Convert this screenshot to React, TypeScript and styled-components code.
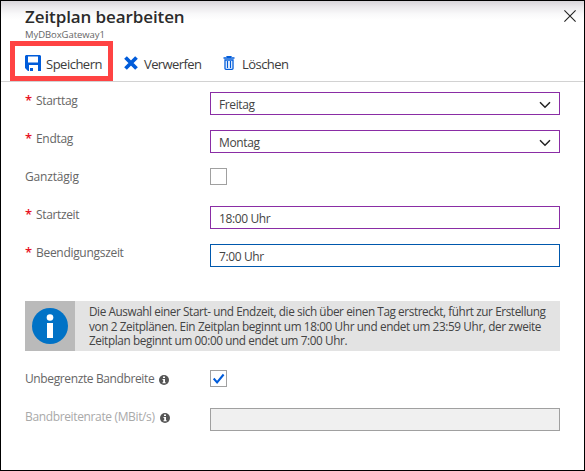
import React from 'react';
import styled, { createGlobalStyle } from 'styled-components';

const GlobalStyle = createGlobalStyle`
  * { box-sizing: border-box; }
  body { margin: 0; background: #fff; }
`;

const Blade = styled.main`
  width: 585px;
  height: 471px;
  border: 1px solid #000;
  background: linear-gradient(#d8d5da 0, #ebe9ec 6px, #f9f9fa 13px, #fff 19px) #fff;
  font-family: 'Open Sans', 'Noto Sans', sans-serif;
  font-size: 12px;
  color: #444;
  overflow: hidden;
`;

const Header = styled.header`
  display: flex;
  justify-content: space-between;
  height: 40px;
  padding: 4px 8px 0 24px;
`;

const Title = styled.h1`
  margin: 0;
  font-size: 17px;
  font-weight: 600;
  line-height: 23px;
  letter-spacing: -0.1px;
  color: #2b2b2b;
  white-space: nowrap;
`;

const Subtitle = styled.div`
  font-size: 9.5px;
  line-height: 13px;
  letter-spacing: -0.07px;
  color: #666;
`;

const CloseButton = styled.button`
  display: flex;
  width: 12px;
  height: 12px;
  margin-top: 5px;
  padding: 0;
  border: 0;
  background: none;
`;

const Toolbar = styled.nav`
  display: flex;
  height: 41px;
  padding-left: 9px;
  border-bottom: 1px solid #d2d2d2;
`;

const Command = styled.button<{ $width: number; $gap: number; $inset?: number; $highlighted?: boolean; $spacing: number }>`
  display: flex;
  align-items: center;
  gap: ${p => p.$gap}px;
  width: ${p => p.$width}px;
  height: 40px;
  padding: 6px 0 0 ${p => p.$inset ?? 0}px;
  border: ${p => (p.$highlighted ? '5px solid #ff4343' : '0')};
  background: none;
  font: inherit;
  font-size: 13px;
  letter-spacing: ${p => p.$spacing}px;
  color: #3c3c3c;
  white-space: nowrap;

  svg {
    flex: none;
    margin-bottom: 2px;
  }
`;

const Form = styled.form`
  display: flex;
  flex-direction: column;
  gap: 15px;
  padding: 10px 24px 0;
`;

const Row = styled.div`
  display: grid;
  grid-template-columns: 185px 350px;
  height: 23px;
`;

const Label = styled.label<{ $disabled?: boolean; $spacing: number }>`
  display: flex;
  height: 18px;
  line-height: 18px;
  letter-spacing: ${p => p.$spacing}px;
  color: ${p => (p.$disabled ? '#a9a9a9' : '#666')};
  white-space: nowrap;
`;

const Required = styled.span`
  width: 11px;
  font-size: 13px;
  font-weight: 600;
  line-height: 17px;
  letter-spacing: 0;
  color: #e81123;
`;

const Hint = styled.svg<{ $gap: number }>`
  flex: none;
  margin: 5px 0 0 ${p => p.$gap}px;
`;

const Field = styled.div<{ $tone: string; $disabled?: boolean }>`
  display: flex;
  align-items: center;
  justify-content: space-between;
  height: 23px;
  padding: 2px 8px 0;
  border: 1px solid ${p => p.$tone};
  background: ${p => (p.$disabled ? '#f0f0f0' : '#fff')};
  letter-spacing: -0.38px;
`;

const Checkbox = styled.div`
  display: flex;
  width: 17px;
  height: 17px;
  border: 1px solid #a0a0a0;
  background: #fff;
`;

const Notice = styled.section`
  display: flex;
  width: 535px;
  height: 50px;
  margin: 19px 0 4px;
  background: #e3e3e3;
`;

const NoticeIcon = styled.div`
  display: flex;
  flex: none;
  align-items: center;
  justify-content: center;
  width: 50px;
  background: #bababa;
`;

const NoticeText = styled.div`
  padding: 3px 0 0 14px;
  font-size: 11.75px;
  line-height: 14.67px;
  color: #444;
  white-space: nowrap;
`;

const Line = styled.div<{ $spacing: number }>`
  letter-spacing: ${p => p.$spacing}px;
`;

const SaveIcon = () => (
  <svg width="16" height="16" viewBox="0 0 16 16">
    <path fill="#015cda" fillRule="evenodd" d="M1 0h14l1 1v15H3L0 13V1zM3 1.5v6h10v-6zM4 10v6h1v-3h3v3h5v-6z" />
  </svg>
);

const DiscardIcon = () => (
  <svg width="14" height="14" viewBox="0 0 14 14">
    <path d="M1.5 1.5l11 11M12.5 1.5l-11 11" stroke="#015cda" strokeWidth="3.8" />
  </svg>
);

const TrashIcon = () => (
  <svg width="12" height="14" viewBox="0 0 12 14">
    <path d="M4 1V.5h4V1M.5 2h11M2 4v8.5q0 .8 1 .8h6q1 0 1-.8V4zM4.5 5v7M7.5 5v7" fill="none" stroke="#015cda" strokeWidth="1.3" />
  </svg>
);

const Chevron = () => (
  <svg width="12" height="8" viewBox="0 0 12 8">
    <path d="M1 1.2l5 5 5-5" fill="none" stroke="#222" strokeWidth="1.5" />
  </svg>
);

const HintIcon = ({ gap }: { gap: number }) => (
  <Hint $gap={gap} width="10" height="10" viewBox="0 0 10 10">
    <circle cx="5" cy="5" r="5" fill="#555" />
    <path d="M4 1.5h2v1.6H4zM3.5 4H6v3.2h.7v1H3.5v-1h.7V5h-.7z" fill="#fff" />
  </Hint>
);

type RowProps = {
  label: string;
  spacing: number;
  required?: boolean;
  disabled?: boolean;
  hintGap?: number;
  children: React.ReactNode;
};

const FormRow = ({ label, required, disabled, hintGap, spacing, children }: RowProps) => (
  <Row>
    <Label $disabled={disabled} $spacing={spacing}>
      {required && <Required>*</Required>}
      <span>{label}</span>
      {hintGap !== undefined && <HintIcon gap={hintGap} />}
    </Label>
    {children}
  </Row>
);

const PURPLE = '#8a2da5';

export default function App() {
  return (
    <>
      <GlobalStyle />
      <Blade>
        <Header>
          <div>
            <Title>Zeitplan bearbeiten</Title>
            <Subtitle>MyDBoxGateway1</Subtitle>
          </div>
          <CloseButton aria-label="Schließen">
            <svg width="12" height="12" viewBox="0 0 12 12">
              <path d="M.4.4l11.2 11.2M11.6.4L.4 11.6" stroke="#222" strokeWidth="1.1" />
            </svg>
          </CloseButton>
        </Header>
        <Toolbar>
          <Command $highlighted $inset={10} $width={103} $gap={5} $spacing={-0.5}><SaveIcon />Speichern</Command>
          <Command $inset={11} $width={110} $gap={6} $spacing={-0.6}><DiscardIcon />Verwerfen</Command>
          <Command $width={90} $gap={7} $spacing={-0.55}><TrashIcon />Löschen</Command>
        </Toolbar>
        <Form>
          <FormRow label="Starttag" spacing={-0.35} required><Field $tone={PURPLE}>Freitag<Chevron /></Field></FormRow>
          <FormRow label="Endtag" spacing={-0.3} required><Field $tone={PURPLE}>Montag<Chevron /></Field></FormRow>
          <FormRow label="Ganztägig" spacing={-0.18}><Checkbox /></FormRow>
          <FormRow label="Startzeit" spacing={-0.36} required><Field $tone={PURPLE}>18:00 Uhr</Field></FormRow>
          <FormRow label="Beendigungszeit" spacing={-0.3} required><Field $tone="#0058ad">7:00 Uhr</Field></FormRow>
          <Notice>
            <NoticeIcon>
              <svg width="36" height="36" viewBox="0 0 36 36">
                <circle cx="18" cy="18" r="18" fill="#0072c6" />
                <circle cx="18" cy="9.5" r="3.3" fill="#fff" />
                <path d="M15 15h6v15h-6z" fill="#fff" />
              </svg>
            </NoticeIcon>
            <NoticeText>
              <Line $spacing={-0.41}>Die Auswahl einer Start- und Endzeit, die sich über einen Tag erstreckt, führt zur Erstellung</Line>
              <Line $spacing={-0.37}>von 2 Zeitplänen. Ein Zeitplan beginnt um 18:00 Uhr und endet um 23:59 Uhr, der zweite</Line>
              <Line $spacing={-0.39}>Zeitplan beginnt um 00:00 und endet um 7:00 Uhr.</Line>
            </NoticeText>
          </Notice>
          <FormRow label="Unbegrenzte Bandbreite" spacing={-0.38} hintGap={5}>
            <Checkbox>
              <svg width="15" height="15" viewBox="0 0 15 15">
                <path d="M2.7 7.5l3.4 4 6.5-8" fill="none" stroke="#015cda" strokeWidth="2" />
              </svg>
            </Checkbox>
          </FormRow>
          <FormRow label="Bandbreitenrate (MBit/s)" spacing={-0.36} disabled hintGap={5}>
            <Field $tone="#a0a0a0" $disabled />
          </FormRow>
        </Form>
      </Blade>
    </>
  );
}
